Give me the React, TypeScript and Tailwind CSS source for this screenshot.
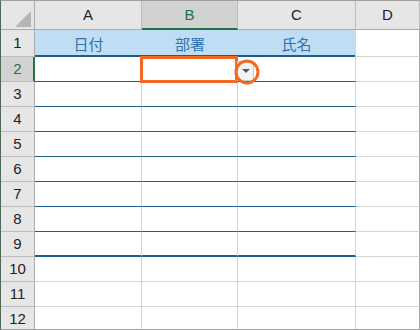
const colHeads = [
  { label: "A", w: "w-[107px]" },
  { label: "B", w: "w-[96px]" },
  { label: "C", w: "w-[118px]" },
  { label: "D", w: "w-[64px]" },
]

const titles = ["日付", "部署", "氏名"]

const rows = [2, 3, 4, 5, 6, 7, 8, 9, 10, 11, 12]

const Corner = () => (
  <div className="w-[34px] h-[29px] shrink-0 bg-[#e6e6e6] border-r border-b border-[#ababab] relative">
    <svg width="34" height="29" className="absolute inset-0">
      <polygon points="14,26 30,26 30,10" fill="#b5b5b5" />
    </svg>
  </div>
)

const RowHead = ({ n, active, tall }: { n: number; active?: boolean; tall?: boolean }) => (
  <div
    className={
      active
        ? "w-[34px] h-[25px] shrink-0 flex items-center justify-center bg-[#d2d2d2] border-b border-[#bdbdbd] border-r-2 border-r-[#217346] text-[#217346] pl-[1px]"
        : `w-[34px] ${tall ? "h-[27px]" : "h-[25px]"} shrink-0 flex items-center justify-center bg-[#e6e6e6] border-b border-[#bdbdbd] border-r border-r-[#ababab] text-[#222]`
    }
  >
    {n}
  </div>
)

export default function App() {
  return (
    <div
      className="relative w-[420px] h-[330px] box-border border-t border-t-[#a0a0a0] border-l border-l-[#51695a] border-b border-b-[#a0a0a0] bg-white overflow-hidden text-[15px]"
      style={{ fontFamily: '"Liberation Sans", Arial, sans-serif' }}
    >
      {/* column headers */}
      <div className="flex">
        <Corner />
        {colHeads.map((c) =>
          c.label === "B" ? (
            <div
              key={c.label}
              className={`${c.w} h-[29px] shrink-0 flex items-center justify-center bg-[#d2d2d2] border-r border-r-[#bdbdbd] border-b-2 border-b-[#217346] text-[#217346] pt-[1px]`}
            >
              {c.label}
            </div>
          ) : (
            <div
              key={c.label}
              className={`${c.w} h-[29px] shrink-0 flex items-center justify-center bg-[#e6e6e6] border-r border-r-[#bdbdbd] border-b border-b-[#ababab] text-[#222]`}
            >
              {c.label}
            </div>
          )
        )}
      </div>

      {/* row 1: titles */}
      <div className="flex">
        <RowHead n={1} tall />
        <div
          className="flex h-[27px] bg-[#bfdef3] border-b-2 border-[#1c5f8e] text-[#2f73ae] text-[15px]"
          style={{ fontFamily: '"Noto Sans CJK JP", sans-serif' }}
        >
          <div className="w-[107px] flex items-center justify-center leading-none pt-[1px]">{titles[0]}</div>
          <div className="w-[96px] flex items-center justify-center leading-none pt-[1px]">{titles[1]}</div>
          <div className="w-[117px] flex items-center justify-center leading-none pt-[1px]">{titles[2]}</div>
        </div>
        <div className="w-[1px] h-[27px] bg-[#d4d4d4]" />
        <div className="w-[64px] h-[27px] border-r border-b border-[#d4d4d4] border-r-[#a8a8a8]" />
      </div>

      {/* rows 2..12 */}
      {rows.map((n) => {
        const bottom =
          n === 9
            ? "border-b-2 border-b-[#1c5f8e]"
            : n < 9
            ? "border-b border-b-[#1c5f8e]"
            : "border-b border-b-[#d4d4d4]"
        return (
          <div key={n} className="flex">
            <RowHead n={n} active={n === 2} />
            <div className={`w-[107px] h-[25px] shrink-0 border-r border-r-[#d4d4d4] ${bottom}`} />
            <div className={`w-[96px] h-[25px] shrink-0 border-r border-r-[#d4d4d4] ${bottom}`} />
            <div className={`w-[118px] h-[25px] shrink-0 border-r border-r-[#d4d4d4] ${bottom}`} />
            <div className="w-[64px] h-[25px] shrink-0 border-r border-r-[#a8a8a8] border-b border-b-[#d4d4d4]" />
          </div>
        )
      })}

      {/* selection highlight on B2 */}
      <div className="absolute left-[139px] top-[55px] w-[98px] h-[27px] border-[3px] border-[#f26a21]" />

      {/* dropdown button */}
      <div className="absolute left-[236px] top-[60px] w-[17px] h-[20px] bg-[#f3f3f3] border border-[#c8c8c8] flex items-center justify-center">
        <svg width="8" height="5">
          <polygon points="0,0 8,0 4,4" fill="#5a5a5a" />
        </svg>
      </div>

      {/* circle annotation */}
      <svg className="absolute left-[231px] top-[56px]" width="30" height="30">
        <circle cx="15" cy="15" r="11" fill="none" stroke="#f26a21" strokeWidth="3" />
      </svg>
    </div>
  )
}
